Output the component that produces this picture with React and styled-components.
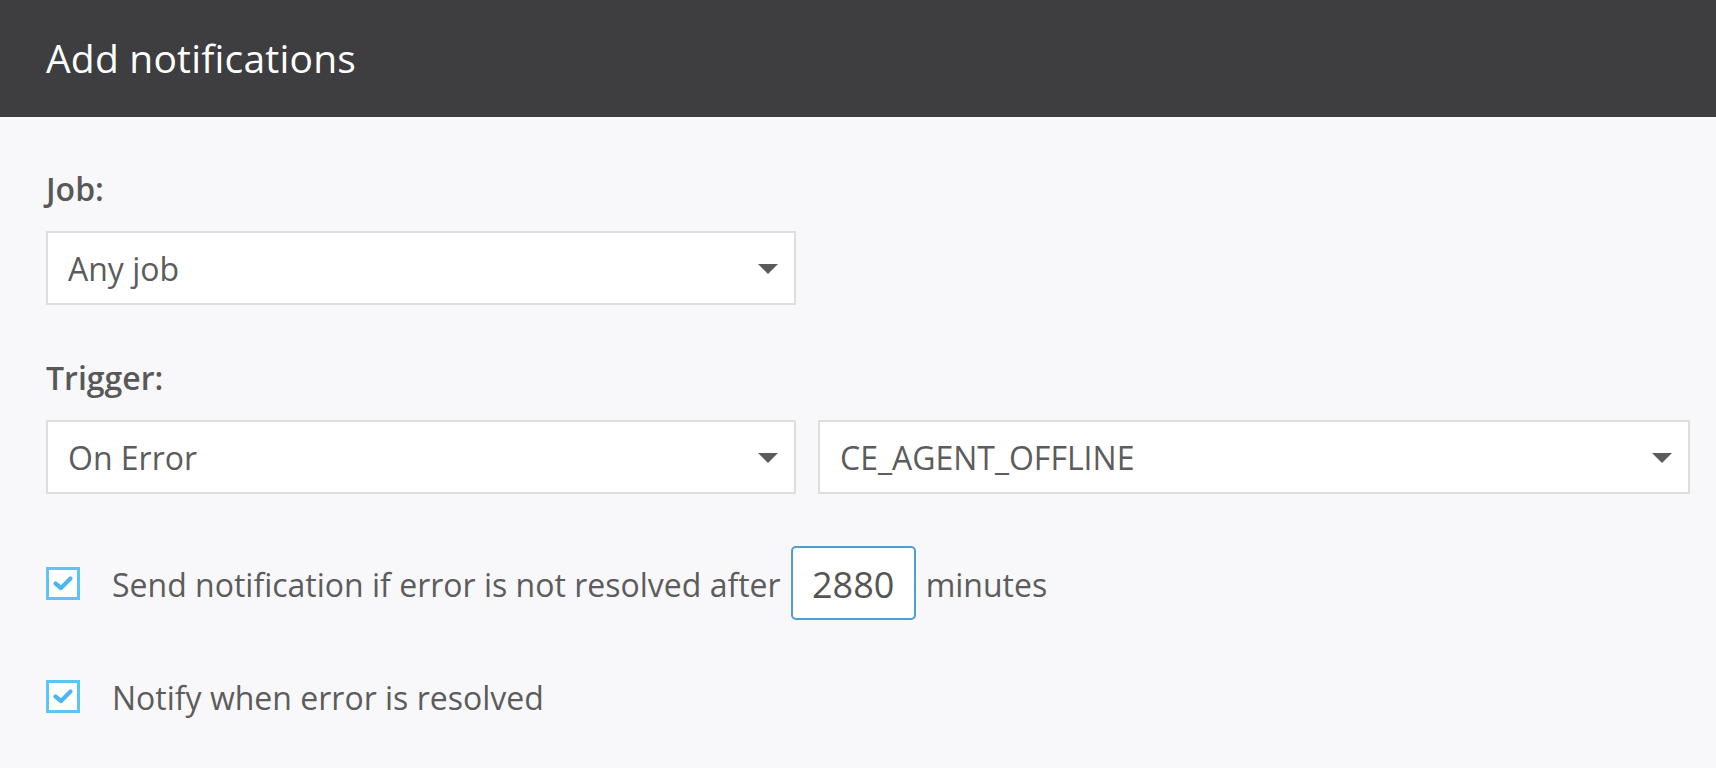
import React, { useState } from "react";
import styled, { createGlobalStyle } from "styled-components";

const GlobalStyle = createGlobalStyle`
  html, body {
    margin: 0;
    padding: 0;
    background: #f8f8fa;
    font-family: "Open Sans", "Noto Sans", sans-serif;
  }
`;

export default function App() {
  const [notifyLate, setNotifyLate] = useState(true);
  const [notifyResolved, setNotifyResolved] = useState(true);
  const [minutes, setMinutes] = useState("2880");

  return (
    <Page>
      <GlobalStyle />
      <Header>
        <Title>Add notifications</Title>
      </Header>

      <Form>
        <Label>Job:</Label>
        <SelectRow>
          <Select width="750px">
            <span>Any job</span>
            <Caret />
          </Select>
        </SelectRow>

        <Label spaced>Trigger:</Label>
        <SelectRow>
          <Select width="750px">
            <span>On Error</span>
            <Caret />
          </Select>
          <Select grow>
            <span>CE_AGENT_OFFLINE</span>
            <Caret />
          </Select>
        </SelectRow>

        <CheckRow first>
          <Checkbox checked={notifyLate} onClick={() => setNotifyLate(!notifyLate)} />
          <CheckText>Send notification if error is not resolved after</CheckText>
          <MinutesInput value={minutes} onChange={e => setMinutes(e.target.value)} />
          <CheckText>minutes</CheckText>
        </CheckRow>

        <CheckRow>
          <Checkbox checked={notifyResolved} onClick={() => setNotifyResolved(!notifyResolved)} />
          <CheckText>Notify when error is resolved</CheckText>
        </CheckRow>
      </Form>
    </Page>
  );
}

function Caret() {
  return (
    <CaretIcon viewBox="0 0 20 10">
      <polygon points="0,0 20,0 10,10" fill="#5b5b5b" />
    </CaretIcon>
  );
}

function Checkbox({ checked, onClick }) {
  return (
    <Box onClick={onClick}>
      {checked && (
        <svg width="28" height="28" viewBox="0 0 28 28">
          <polyline
            points="6.5,14.5 12,19 21.5,9.5"
            fill="none"
            stroke="#4db6f2"
            strokeWidth="4.2"
            strokeLinecap="round"
            strokeLinejoin="round"
          />
        </svg>
      )}
    </Box>
  );
}

const Page = styled.div`
  min-height: 768px;
  background: #f8f8fa;
`;

const Header = styled.div`
  height: 117px;
  background: #3e3e40;
  display: flex;
  align-items: center;
  padding-left: 46px;
  box-sizing: border-box;
`;

const Title = styled.h1`
  margin: 0 0 3px;
  color: #ffffff;
  font-size: 39px;
  font-weight: 400;
  letter-spacing: 0.2px;
`;

const Form = styled.div`
  padding: 54px 26px 0 46px;
`;

const Label = styled.div`
  font-size: 32px;
  line-height: 36px;
  font-weight: 600;
  color: #585858;
  margin-top: ${p => (p.spaced ? "55px" : "0")};
  margin-bottom: 24px;
`;

const SelectRow = styled.div`
  display: flex;
  gap: 22px;
`;

const Select = styled.div`
  box-sizing: border-box;
  height: 74px;
  width: ${p => p.width || "auto"};
  flex: ${p => (p.grow ? 1 : "none")};
  background: #ffffff;
  border: 2px solid #dedede;
  display: flex;
  align-items: center;
  justify-content: space-between;
  padding: 0 16px 0 20px;
  font-size: 32px;
  color: #5c5c5c;
  cursor: pointer;
`;

const CaretIcon = styled.svg`
  width: 20px;
  height: 10px;
  margin-top: 2px;
`;

const CheckRow = styled.div`
  display: flex;
  align-items: center;
  height: 74px;
  margin-top: ${p => (p.first ? "52px" : "39px")};
`;

const Box = styled.div`
  box-sizing: border-box;
  width: 34px;
  height: 33px;
  border: 3px solid #5bc5f8;
  background: #ffffff;
  display: flex;
  align-items: center;
  justify-content: center;
  margin-right: 32px;
  cursor: pointer;
`;

const CheckText = styled.span`
  font-size: 32px;
  color: #5c5c5c;
  padding-top: 2px;
`;

const MinutesInput = styled.input`
  box-sizing: border-box;
  width: 125px;
  height: 74px;
  margin: 0 10px;
  border: 2px solid #4b9fd2;
  border-radius: 5px;
  background: #ffffff;
  font-family: "Open Sans", sans-serif;
  font-size: 36px;
  color: #555555;
  text-align: center;
  outline: none;
  padding: 2px 0 0;
`;
